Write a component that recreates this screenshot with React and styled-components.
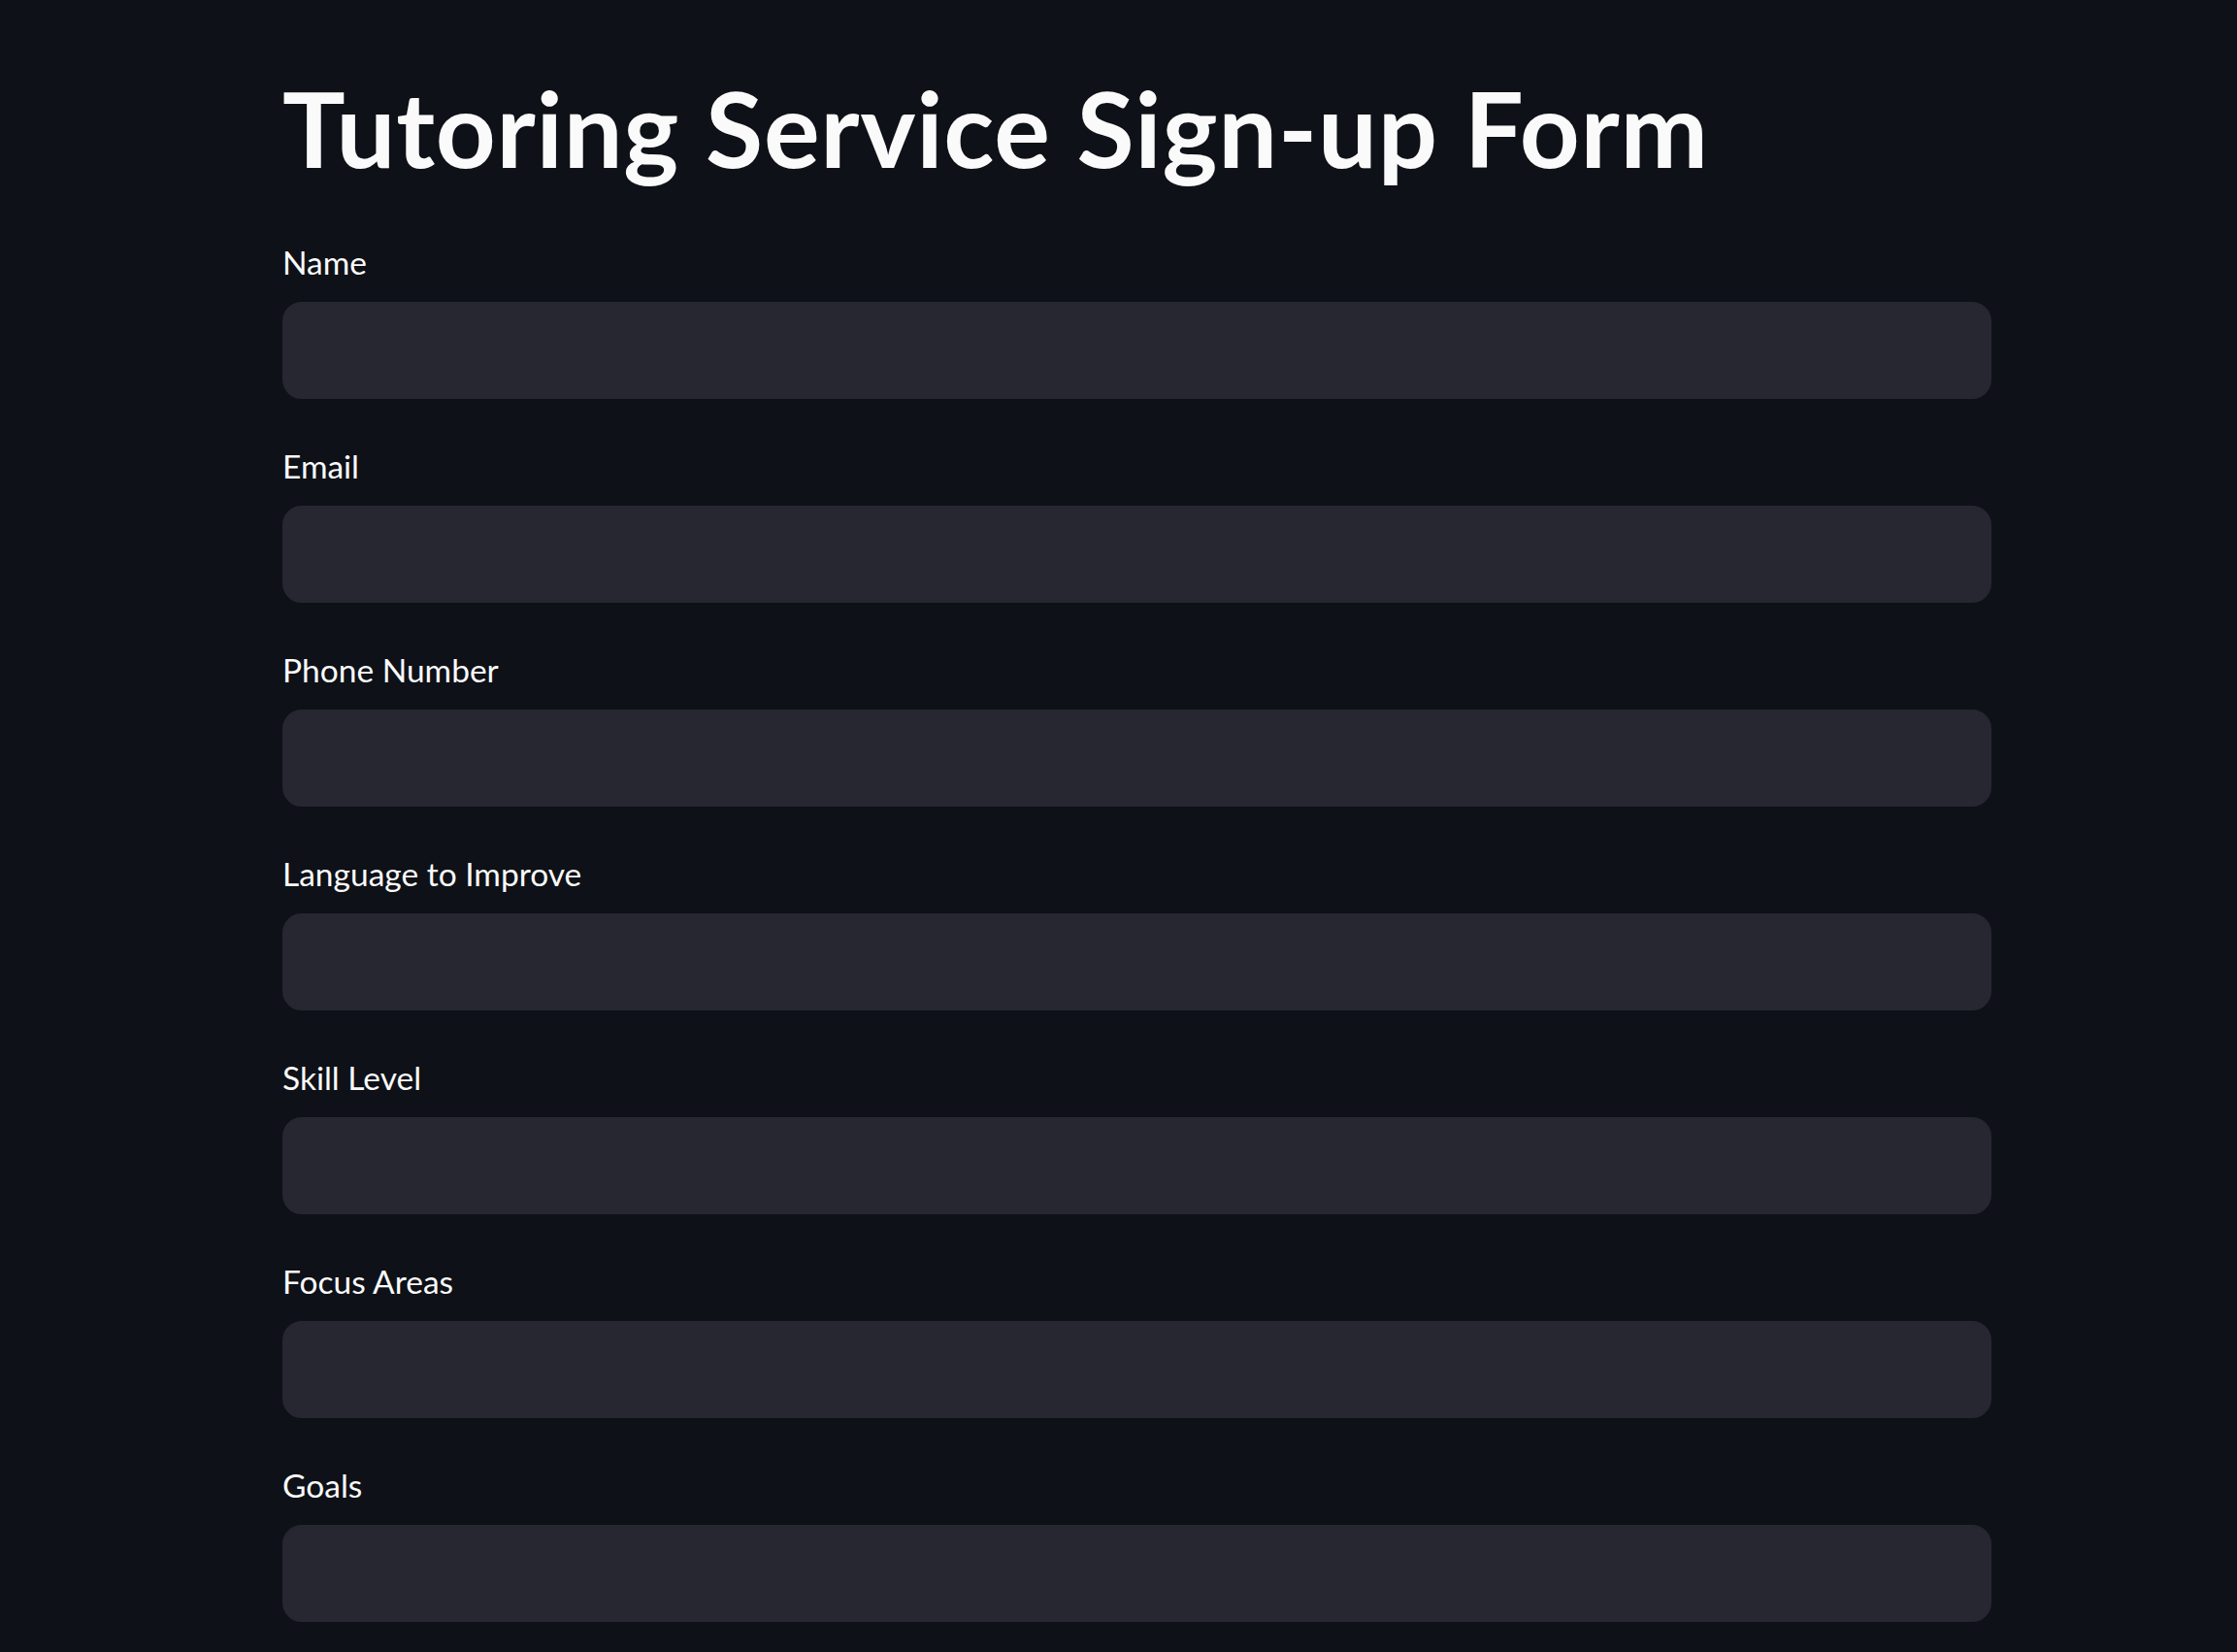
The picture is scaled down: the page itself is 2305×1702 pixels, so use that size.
import React from "react";
import styled, { createGlobalStyle } from "styled-components";

const GlobalStyle = createGlobalStyle`
  html, body {
    margin: 0;
    padding: 0;
    background: #0e1117;
  }
  body {
    font-family: "Lato", "Noto Sans", sans-serif;
    color: #fafafa;
  }
`;

const Page = styled.div`
  min-height: 1702px;
  background: #0e1117;
  padding: 67px 0 0 291px;
  box-sizing: border-box;
`;

const Main = styled.div`
  width: 1761px;
  display: flex;
  flex-direction: column;
  gap: 40px;
`;

const Title = styled.h1`
  margin: 0 0 4px;
  font-family: "Lato", sans-serif;
  font-weight: 700;
  font-size: 108px;
  line-height: 1.2;
  letter-spacing: 0.75px;
  color: #fafafa;
`;

const Field = styled.div`
  display: flex;
  flex-direction: column;
`;

const Label = styled.label`
  display: block;
  height: 70px;
  font-family: "Lato", sans-serif;
  font-size: 33.5px;
  line-height: 58px;
  color: #fafafa;
`;

const Input = styled.input`
  height: 100px;
  width: 100%;
  box-sizing: border-box;
  background: #262730;
  border: 2px solid #262730;
  border-radius: 20px;
  outline: none;
  color: #fafafa;
  font-size: 35px;
  padding: 0 30px;
`;

const fields = [
  "Name",
  "Email",
  "Phone Number",
  "Language to Improve",
  "Skill Level",
  "Focus Areas",
  "Goals",
];

export default function App() {
  return (
    <>
      <GlobalStyle />
      <Page>
        <Main>
          <Title>Tutoring Service Sign-up Form</Title>
          {fields.map((f) => (
            <Field key={f}>
              <Label>{f}</Label>
              <Input aria-label={f} />
            </Field>
          ))}
        </Main>
      </Page>
    </>
  );
}
